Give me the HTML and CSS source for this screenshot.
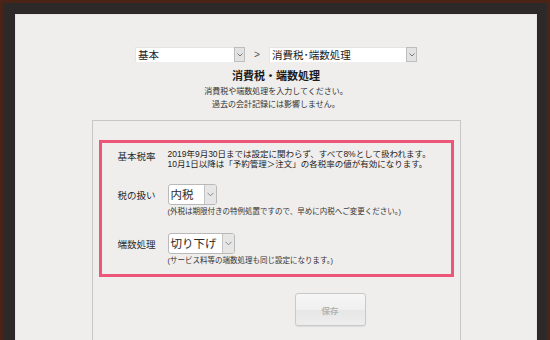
FILE: index.html
```html
<!DOCTYPE html>
<html lang="ja">
<head>
<meta charset="utf-8">
<link rel="stylesheet" href="styles.css">
</head>
<body>
<div class="frame">
  <div class="paper">
    <div class="nav">
      <div class="sel sel-a"><span class="sel-text">基本</span><span class="sel-btn"><svg width="6" height="4" viewBox="0 0 6 4"><polyline points="0.5,0.5 3,3 5.5,0.5" fill="none" stroke="#777" stroke-width="1"/></svg></span></div>
      <span class="sep">&gt;</span>
      <div class="sel sel-b"><span class="sel-text">消費税･端数処理</span><span class="sel-btn"><svg width="6" height="4" viewBox="0 0 6 4"><polyline points="0.5,0.5 3,3 5.5,0.5" fill="none" stroke="#777" stroke-width="1"/></svg></span></div>
    </div>
    <h1 class="title">消費税・端数処理</h1>
    <p class="desc">消費税や端数処理を入力してください。<br>過去の会計記録には影響しません。</p>
    <div class="panel">
      <div class="highlight">
        <div class="row row-first">
          <div class="label label-top">基本税率</div>
          <div class="value text">2019年9月30日までは設定に関わらず、すべて8%として扱われます。<br>10月1日以降は「予約管理＞注文」の各税率の値が有効になります。</div>
        </div>
        <div class="row row-sel">
          <div class="label">税の扱い</div>
          <div class="value"><div class="dd dd-1"><span class="dd-text">内税</span><span class="dd-btn"><svg width="7" height="5" viewBox="0 0 7 5"><polyline points="0.5,0.8 3.5,3.8 6.5,0.8" fill="none" stroke="#888" stroke-width="1"/></svg></span></div></div>
        </div>
        <div class="row row-note">
          <div class="label"></div>
          <div class="value note">(外税は期限付きの特例処置ですので、早めに内税へご変更ください。)</div>
        </div>
        <div class="row row-sel row-sel2">
          <div class="label">端数処理</div>
          <div class="value"><div class="dd dd-2"><span class="dd-text">切り下げ</span><span class="dd-btn"><svg width="7" height="5" viewBox="0 0 7 5"><polyline points="0.5,0.8 3.5,3.8 6.5,0.8" fill="none" stroke="#888" stroke-width="1"/></svg></span></div></div>
        </div>
        <div class="row row-note">
          <div class="label"></div>
          <div class="value note">(サービス料等の端数処理も同じ設定になります。)</div>
        </div>
      </div>
      <button class="save" type="button">保存</button>
    </div>
  </div>
</div>
</body>
</html>
```
FILE: styles.css
```css
html, body {
  margin: 0;
  padding: 0;
  height: 340px;
  overflow: hidden;
  background: #4a2416;
}
body {
  font-family: "Noto Sans CJK JP", "Noto Sans", sans-serif;
  color: #222;
}
.frame {
  margin: 3px 3px 0 3px;
  padding: 11px 10px 0 12px;
  background: #2c2928;
  height: 400px;
}
.paper {
  background: #efeeec;
  height: 400px;
  overflow: hidden;
  box-shadow: inset 0 0 0 1px #e6e5e2;
}
.nav {
  display: flex;
  justify-content: center;
  align-items: center;
  gap: 8px;
  margin-top: 33px;
}
.sel {
  display: flex;
  height: 15px;
  background: #fff;
  box-sizing: border-box;
  border-top: 1px solid #e4e4e4;
  border-left: 1px solid #e4e4e4;
}
.sel-a { width: 110px; }
.sel-b { width: 148px; }
.sel-text {
  flex: 1;
  font-size: 10.5px;
  line-height: 14px;
  padding-left: 2px;
  color: #222;
  white-space: nowrap;
}
.sel-btn {
  width: 9px;
  background: #e2e2e2;
  border: 1px solid #bdbdbd;
  display: flex;
  align-items: center;
  justify-content: center;
  margin-top: -1px;
}
.sep {
  width: 8px;
  text-align: center;
  font-size: 10px;
  color: #555;
  font-family: "Liberation Sans", sans-serif;
}
.title {
  margin: 6px 0 0;
  font-size: 11px;
  line-height: 14px;
  font-weight: bold;
  text-align: center;
  color: #1a1a1a;
}
.desc {
  margin: 3px 0 0;
  font-size: 8px;
  line-height: 12.5px;
  text-align: center;
  color: #333;
}
.panel {
  width: 369px;
  box-sizing: border-box;
  margin: 10px auto 0;
  border: 1px solid #c6c6c6;
  border-bottom: none;
  padding: 19px 6px 40px;
  height: 260px;
}
.highlight {
  border: 3px solid #ee5679;
  padding: 6px 8px 8px 16px;
}
.row {
  display: grid;
  grid-template-columns: 50px 1fr;
  align-items: center;
}
.row-first { align-items: start; }
.row-sel { margin-top: 15px; }
.row-sel2 { margin-top: 16px; }
.row-note { margin-top: 2px; }
.label {
  font-size: 9.5px;
  line-height: 12px;
  color: #2a2a2a;
}
.label-top { padding-top: 1px; }
.text {
  font-family: "Liberation Sans", "Noto Sans CJK JP", sans-serif;
  font-size: 8.5px;
  line-height: 10px;
  color: #222;
  white-space: nowrap;
}
.note {
  font-family: "Liberation Sans", "Noto Sans CJK JP", sans-serif;
  font-size: 7.5px;
  line-height: 10px;
  color: #333;
  white-space: nowrap;
}
.dd {
  display: flex;
  height: 21px;
  box-sizing: border-box;
  background: #fff;
  border: 1px solid #b9b9b9;
  border-radius: 3px;
  overflow: hidden;
}
.dd-1 { width: 49px; }
.dd-2 { width: 67px; }
.dd-text {
  flex: 1;
  font-size: 11.5px;
  line-height: 19px;
  padding-left: 2px;
  color: #2a2a2a;
  white-space: nowrap;
}
.dd-btn {
  width: 11px;
  background: #e6e6e6;
  border-left: 1px solid #c4c4c4;
  display: flex;
  align-items: center;
  justify-content: center;
}
.save {
  display: block;
  margin: 16px 0 0 196px;
  width: 71px;
  height: 33px;
  border: 1px solid #c9c9c9;
  border-radius: 3px;
  background: linear-gradient(#f6f6f6 0%, #efefef 50%, #e6e6e6 51%, #ededed 100%);
  color: #b5b5b5;
  font-family: "Noto Sans CJK JP", sans-serif;
  font-size: 8.5px;
  font-weight: bold;
  padding: 0;
  box-shadow: 0 1px 1px rgba(0,0,0,0.08);
}
```
